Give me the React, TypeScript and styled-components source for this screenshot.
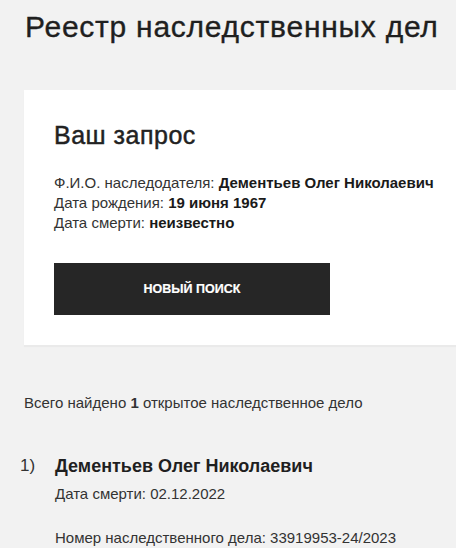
import * as React from 'react';
import styled, { createGlobalStyle } from 'styled-components';

const GlobalStyle = createGlobalStyle`
  html, body {
    margin: 0;
    padding: 0;
    background: #f2f2f2;
  }
  body {
    font-family: "Liberation Sans", Arial, sans-serif;
    color: #222;
    overflow: hidden;
  }
`;

const Page = styled.div`
  padding: 10px 0 0 24px;
  width: 456px;
  box-sizing: border-box;
  overflow: hidden;
`;

const Title = styled.h1`
  margin: 0 0 46px 1px;
  font-size: 30px;
  font-weight: 400;
  line-height: 34px;
  color: #1f1f1f;
  letter-spacing: 0.75px;
  white-space: nowrap;
  -webkit-text-stroke: 0.35px #1f1f1f;
`;

const Card = styled.section`
  background: #fff;
  padding: 30px;
  box-shadow: 0 2px 1px rgba(0, 0, 0, 0.03);
`;

const CardTitle = styled.h2`
  margin: 0 0 23px;
  font-size: 25px;
  font-weight: 400;
  line-height: 30px;
  letter-spacing: 0.5px;
  -webkit-text-stroke: 0.45px #222;
`;

const Line = styled.div`
  font-size: 15px;
  line-height: 20px;
  color: #333;
  white-space: nowrap;

  b {
    color: #1a1a1a;
  }
`;

const Info = styled.div`
  margin-bottom: 30px;
`;

const SearchButton = styled.button`
  display: flex;
  align-items: center;
  justify-content: center;
  width: 276px;
  height: 52px;
  border: 0;
  background: #262626;
  color: #fff;
  font-family: inherit;
  font-size: 12.5px;
  font-weight: 700;
  text-transform: uppercase;
  cursor: pointer;
  -webkit-text-stroke: 0.2px #fff;
`;

const Summary = styled.p`
  margin: 48px 0 0;
  font-size: 15px;
  line-height: 20px;
  color: #333;
`;

const CaseItem = styled.div`
  display: grid;
  grid-template-columns: 35px 1fr;
  margin: 41px 0 0 -4px;
`;

const Index = styled.div`
  font-size: 17px;
  line-height: 24px;
  color: #333;
`;

const CaseName = styled.div`
  font-size: 18px;
  font-weight: 700;
  line-height: 24px;
  color: #1f1f1f;
`;

const CaseMeta = styled.div<{ $gap?: number }>`
  margin-top: ${p => p.$gap ?? 0}px;
  font-size: 15px;
  line-height: 20px;
  color: #333;
`;

export default function App() {
  return (
    <Page>
      <GlobalStyle />
      <Title>Реестр наследственных дел</Title>
      <Card>
        <CardTitle>Ваш запрос</CardTitle>
        <Info>
          <Line>Ф.И.О. наследодателя: <b>Дементьев Олег Николаевич</b></Line>
          <Line>Дата рождения: <b>19 июня 1967</b></Line>
          <Line>Дата смерти: <b>неизвестно</b></Line>
        </Info>
        <SearchButton>Новый поиск</SearchButton>
      </Card>
      <Summary>Всего найдено <b>1</b> открытое наследственное дело</Summary>
      <CaseItem>
        <Index>1)</Index>
        <div>
          <CaseName>Дементьев Олег Николаевич</CaseName>
          <CaseMeta $gap={6}>Дата смерти: 02.12.2022</CaseMeta>
          <CaseMeta $gap={24}>Номер наследственного дела: 33919953-24/2023</CaseMeta>
        </div>
      </CaseItem>
    </Page>
  );
}
